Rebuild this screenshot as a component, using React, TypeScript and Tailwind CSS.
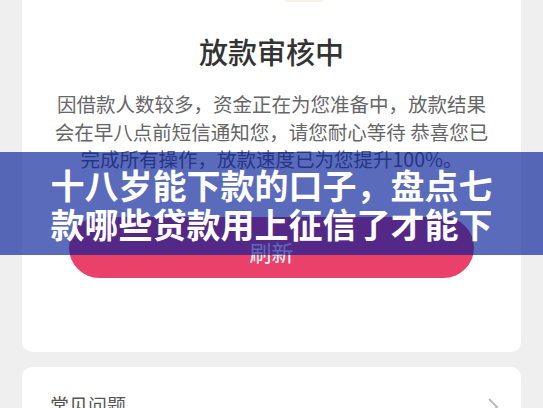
import React from "react";

export default function App() {
  return (
    <div
      className="relative w-[543px] h-[408px] overflow-hidden bg-[#efefef]"
      style={{ fontFamily: '"Noto Sans CJK SC", "Noto Sans", sans-serif' }}
    >
      <div className="mx-[22px] bg-white rounded-b-[10px] pb-[74px] relative">
        <div className="absolute left-[262px] top-[-6px] w-[40px] h-[8px] rounded-full bg-[#f6f5e2]" />
        <div className="pt-[31px] text-center text-[29px] leading-[40px] font-medium text-[#333333]">
          放款审核中
        </div>
        <div className="mt-[19px] text-center text-[19.5px] leading-[27.5px] text-[#666666]">
          <div>因借款人数较多，资金正在为您准备中，放款结果</div>
          <div>会在早八点前短信通知您，请您耐心等待 恭喜您已</div>
          <div>完成所有操作，放款速度已为您提升100%。</div>
        </div>
        <div className="mt-[44px] mx-[47px] h-[61px] rounded-full bg-[#e94169] flex items-center justify-center text-white text-[22px] pt-[8px]">
          刷新
        </div>
      </div>
      <div className="mx-[22px] mt-[15px] bg-white rounded-[10px] pt-[24px] pl-[28px] pr-[22px] flex justify-between h-[80px] items-start">
        <div className="text-[19px] leading-[28px] text-[#555555]">常见问题</div>
        <svg width="12" height="20" viewBox="0 0 12 20" className="mt-[6px]">
          <path d="M2 2 L10 10 L2 18" fill="none" stroke="#bbbbbb" strokeWidth="2" />
        </svg>
      </div>
      <div className="absolute left-0 right-0 top-[152px] h-[103px] bg-[rgba(3,28,150,0.65)] flex flex-col items-center justify-center text-white font-bold text-[34px] leading-[39.5px] pt-[1px]">
        <div>十八岁能下款的口子，盘点七</div>
        <div>款哪些贷款用上征信了才能下</div>
      </div>
    </div>
  );
}
